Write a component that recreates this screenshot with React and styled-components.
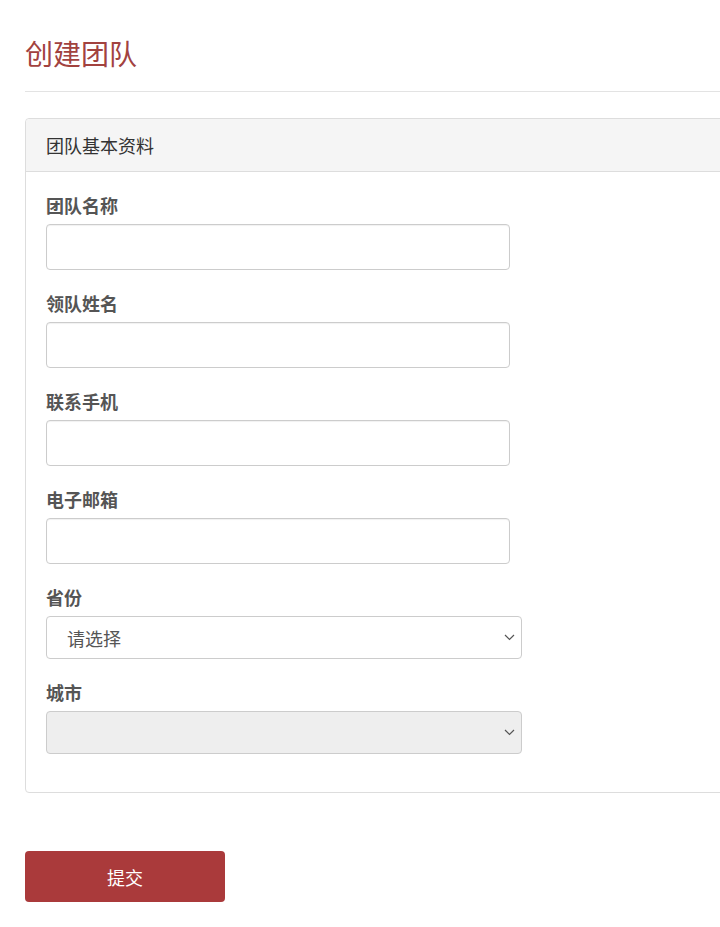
import React from "react";
import styled, { createGlobalStyle } from "styled-components";

const Global = createGlobalStyle`
  html, body { margin: 0; padding: 0; background: #fff; }
  body { font-family: "Noto Sans CJK SC", "Noto Sans", sans-serif; color: #333; }
  * { box-sizing: border-box; }
`;

const Page = styled.div`
  padding: 33px 0 40px 25px;
  width: 100%;
  overflow: hidden;
`;

const Title = styled.h1`
  margin: 0;
  font-size: 28px;
  line-height: 40px;
  font-weight: 400;
  color: #a2423f;
`;

const Rule = styled.div`
  margin-top: 18px;
  border-top: 1px solid #e3e3e3;
`;

const Panel = styled.section`
  margin-top: 26px;
  margin-right: -6px;
  border: 1px solid #dddddd;
  border-radius: 4px;
  background: #fff;
`;

const PanelHead = styled.div`
  height: 53px;
  display: flex;
  align-items: center;
  padding: 0 20px;
  background: #f5f5f5;
  border-bottom: 1px solid #dddddd;
  border-radius: 4px 4px 0 0;
  font-size: 18px;
  color: #333;
`;

const PanelBody = styled.div`
  padding: 21px 20px 17px;
  display: flex;
  flex-direction: column;
`;

const Group = styled.div`
  display: flex;
  flex-direction: column;
  margin-bottom: 21px;
`;

const Label = styled.label`
  font-size: 18px;
  line-height: 24px;
  font-weight: 700;
  color: #555;
  margin-bottom: 7px;
`;

const Input = styled.input`
  width: 464px;
  height: 46px;
  border: 1px solid #cccccc;
  border-radius: 4px;
  background: #fff;
  box-shadow: inset 0 1px 1px rgba(0, 0, 0, 0.06);
  font-size: 18px;
  padding: 0 12px;
  outline: none;
`;

const SelectWrap = styled.div`
  position: relative;
  width: 476px;
`;

const Select = styled.select`
  appearance: none;
  -webkit-appearance: none;
  width: 100%;
  height: 43px;
  border: 1px solid #cccccc;
  border-radius: 4px;
  background: ${(p) => (p.disabled ? "#eeeeee" : "#fff")};
  font-family: inherit;
  font-size: 18px;
  color: #555;
  padding: 0 20px;
  outline: none;
  opacity: 1;
`;

const Chevron = styled.svg`
  position: absolute;
  right: 7px;
  top: 50%;
  margin-top: -4px;
  width: 11px;
  height: 7px;
  pointer-events: none;
`;

const Submit = styled.button`
  margin-top: 58px;
  width: 200px;
  height: 51px;
  border: none;
  border-radius: 4px;
  background: #aa3a3b;
  color: #fff;
  font-family: inherit;
  font-size: 18px;
  cursor: pointer;
`;

const ChevronIcon = () => (
  <Chevron viewBox="0 0 11 7">
    <path d="M1 1l4.5 4.5L10 1" fill="none" stroke="#555" strokeWidth="1.2" />
  </Chevron>
);

const fields = ["团队名称", "领队姓名", "联系手机", "电子邮箱"];

export default function App() {
  return (
    <>
      <Global />
      <Page>
        <Title>创建团队</Title>
        <Rule />
        <Panel>
          <PanelHead>团队基本资料</PanelHead>
          <PanelBody>
            {fields.map((f) => (
              <Group key={f}>
                <Label>{f}</Label>
                <Input type="text" />
              </Group>
            ))}
            <Group>
              <Label>省份</Label>
              <SelectWrap>
                <Select defaultValue="">
                  <option value="">请选择</option>
                </Select>
                <ChevronIcon />
              </SelectWrap>
            </Group>
            <Group>
              <Label>城市</Label>
              <SelectWrap>
                <Select disabled>
                  <option value=""></option>
                </Select>
                <ChevronIcon />
              </SelectWrap>
            </Group>
          </PanelBody>
        </Panel>
        <Submit type="button">提交</Submit>
      </Page>
    </>
  );
}
